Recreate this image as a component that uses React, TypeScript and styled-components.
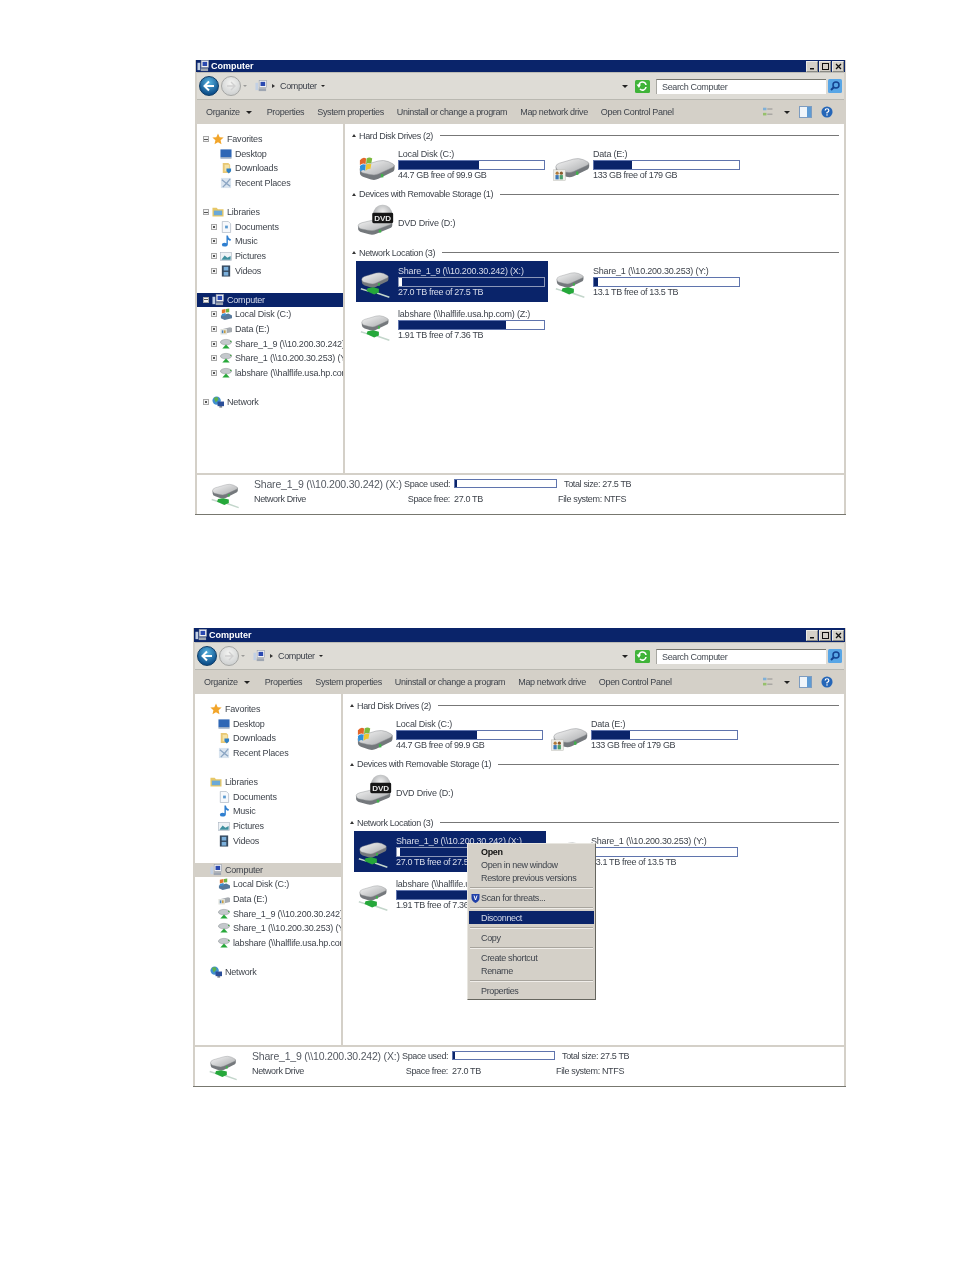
import React from 'react';
import styled, { createGlobalStyle } from 'styled-components';

const GlobalStyle = createGlobalStyle`
  html, body {
    margin: 0;
    padding: 0;
    background: #ffffff;
  }
  body {
    font-family: "Liberation Sans", Arial, sans-serif;
    font-size: 9px;
    letter-spacing: -0.35px;
    color: #333a45;
  }
`;

const Page = styled.div`
  width: 954px;
  height: 1270px;
  padding-top: 60px;
  box-sizing: border-box;
  overflow: hidden;
  display: flex;
  flex-direction: column;
  gap: 113px;
`;

const Win = styled.div<{ $left: number; $width: number }>`
  position: relative;
  margin-left: ${({ $left }) => $left}px;
  width: ${({ $width }) => $width}px;
  box-sizing: border-box;
  background: #d4d0c8;
  border-bottom: 1px solid #77776f;
  padding: 0 2px;
  filter: blur(0.45px);
`;

const TitleBar = styled.div<{ $height: number }>`
  height: ${({ $height }) => $height}px;
  margin: 0 -1px;
  background: #0a246a;
  display: flex;
  align-items: center;
  padding: 0 1px;
  gap: 2px;
  color: #ffffff;
  font-weight: 700;
  font-size: 9px;
  letter-spacing: 0;
`;

const TitleText = styled.span`
  flex: 1;
`;

const WinButtons = styled.div`
  display: flex;
  gap: 1px;
`;

const WinButton = styled.span`
  width: 12px;
  height: 11px;
  background: #d4d0c8;
  border: 1px solid #8a8a84;
  border-top-color: #ecebe6;
  border-left-color: #ecebe6;
  box-sizing: border-box;
  display: flex;
  align-items: center;
  justify-content: center;
`;

const AddressBar = styled.div`
  height: 28px;
  display: flex;
  align-items: center;
  background: #dedcd6;
  border-top: 1px solid #bdbcb6;
  border-bottom: 1px solid #b9b8b1;
  box-sizing: border-box;
  padding-left: 2px;
`;

const NavButton = styled.span<{ $dim?: boolean }>`
  width: 20px;
  height: 20px;
  border-radius: 50%;
  margin-right: 2px;
  display: flex;
  align-items: center;
  justify-content: center;
  box-sizing: border-box;
  background: ${({ $dim }) =>
    $dim ? 'radial-gradient(circle at 50% 35%, #f5f5f3, #c4c7c8)' : 'radial-gradient(circle at 50% 30%, #59b4e0, #0d4f8b 75%)'};
  border: 1px solid ${({ $dim }) => ($dim ? '#a5a6a4' : '#0e3c66')};
`;

const AddressField = styled.div`
  flex: 1;
  height: 20px;
  display: flex;
  align-items: center;
  gap: 4px;
  margin-left: 8px;
  color: #3c414a;
`;

const FieldSpacer = styled.span`
  flex: 1;
`;

const Caret = styled.span<{ $size?: number; $pale?: boolean }>`
  width: 0;
  height: 0;
  border-left: ${({ $size = 3 }) => $size}px solid transparent;
  border-right: ${({ $size = 3 }) => $size}px solid transparent;
  border-top: ${({ $size = 3 }) => $size}px solid ${({ $pale }) => ($pale ? '#9a9a98' : '#222222')};
`;

const CrumbArrow = styled.span`
  width: 0;
  height: 0;
  border-top: 2px solid transparent;
  border-bottom: 2px solid transparent;
  border-left: 3px solid #333333;
  margin: 0 1px;
`;

const SearchBox = styled.div`
  width: 170px;
  height: 15px;
  margin: 0 2px 0 6px;
  background: #ffffff;
  border-top: 1px solid #77776f;
  border-left: 1px solid #a8a8a2;
  box-sizing: border-box;
  display: flex;
  align-items: center;
  padding-left: 5px;
  color: #444a52;
`;

const ToolBar = styled.div`
  height: 24px;
  display: flex;
  align-items: center;
  background: #d4d0c8;
  padding: 0 11px 0 9px;
  color: #3f444c;
`;

const ToolItem = styled.span<{ $menu?: boolean }>`
  margin-right: ${({ $menu }) => ($menu ? 15 : 13)}px;
  display: flex;
  align-items: center;
  gap: 6px;
  white-space: nowrap;
`;

const ToolRight = styled.div`
  margin-left: auto;
  display: flex;
  align-items: center;
  gap: 9px;
`;

const Body = styled.div<{ $height: number }>`
  height: ${({ $height }) => $height}px;
  display: flex;
  background: #ffffff;
`;

const Sidebar = styled.div`
  width: 146px;
  flex: none;
  padding-top: 8px;
  overflow: hidden;
`;

const Splitter = styled.div`
  width: 2px;
  flex: none;
  background: #d4d0c8;
`;

const TreeSection = styled.div`
  margin-bottom: 14.6px;
`;

const TreeRow = styled.div<{ $state?: 'navy' | 'grey' }>`
  height: 14.6px;
  display: flex;
  align-items: center;
  white-space: nowrap;
  background: ${({ $state }) => ($state === 'navy' ? '#0a246a' : $state === 'grey' ? '#d4d0c8' : 'transparent')};
  color: ${({ $state }) => ($state === 'navy' ? '#d8dcea' : '#3f444c')};
`;

const Expander = styled.span<{ $child?: boolean; $off?: boolean; $sign: 'minus' | 'plus' }>`
  width: 6px;
  height: 6px;
  flex: none;
  margin-left: ${({ $child }) => ($child ? 14 : 6)}px;
  margin-right: 3px;
  box-sizing: border-box;
  border: 1px solid #a8a8a8;
  background: #f4f4f4;
  display: flex;
  align-items: center;
  justify-content: center;
  visibility: ${({ $off }) => ($off ? 'hidden' : 'visible')};
  &::before {
    content: '';
    width: ${({ $sign }) => ($sign === 'minus' ? 4 : 2)}px;
    height: ${({ $sign }) => ($sign === 'minus' ? 1 : 2)}px;
    background: #555555;
  }
`;

const TreeLabel = styled.span`
  margin-left: 3px;
  letter-spacing: -0.2px;
`;

const Main = styled.div`
  flex: 1;
  min-width: 0;
  padding: 5px 5px 0 7px;
`;

const GroupHead = styled.div`
  height: 13px;
  display: flex;
  align-items: center;
  gap: 3px;
  color: #3f444c;
  white-space: nowrap;
  &::before {
    content: '';
    width: 0;
    height: 0;
    border-left: 2px solid transparent;
    border-right: 2px solid transparent;
    border-bottom: 3px solid #333333;
  }
  &::after {
    content: '';
    flex: 1;
    height: 1px;
    margin-left: 4px;
    background: #777777;
  }
`;

const Tiles = styled.div`
  display: grid;
  grid-template-columns: 192px 192px;
  column-gap: 3px;
  row-gap: 2px;
  padding: 2px 0 2.5px 4px;
`;

const Tile = styled.div<{ $selected?: boolean }>`
  height: 41px;
  display: flex;
  align-items: center;
  box-sizing: border-box;
  background: ${({ $selected }) => ($selected ? '#0a246a' : 'transparent')};
  color: ${({ $selected }) => ($selected ? '#d8dcea' : '#3f444c')};
`;

const TileIcon = styled.span`
  width: 42px;
  flex: none;
  display: flex;
  justify-content: center;
`;

const TileText = styled.div`
  flex: 1;
  min-width: 0;
  white-space: nowrap;
`;

const TileName = styled.div`
  height: 11px;
  line-height: 10px;
  letter-spacing: -0.2px;
`;

const TileSub = styled.div`
  height: 10px;
  line-height: 10px;
`;

const Track = styled.div<{ $selected?: boolean; $width: number; $height: number }>`
  width: ${({ $width }) => $width}px;
  height: ${({ $height }) => $height}px;
  box-sizing: border-box;
  border: 1px solid ${({ $selected }) => ($selected ? '#8b97b8' : '#5f74ad')};
  background: ${({ $selected }) => ($selected ? '#0a246a' : '#ffffff')};
`;

const Fill = styled.div<{ $selected?: boolean }>`
  height: 100%;
  background: ${({ $selected }) => ($selected ? '#ffffff' : '#0a246a')};
`;

const Details = styled.div`
  height: 41px;
  background: #ffffff;
  border-top: 2px solid #d4d0c8;
  box-sizing: border-box;
  display: grid;
  grid-template-columns: 57px 150px 46px 4px 103px 1fr;
  grid-template-rows: 18px 12px;
  align-items: center;
  color: #3f444c;
  white-space: nowrap;
`;

const DetailIcon = styled.div`
  grid-row: 1 / 3;
  display: flex;
  justify-content: flex-end;
  padding: 4px 9px 0 0;
`;

const DetailTitle = styled.div`
  font-size: 10.5px;
  letter-spacing: -0.2px;
  color: #555a62;
`;

const DetailNote = styled.div`
  grid-column: 2;
`;

const DetailLabel = styled.div`
  text-align: right;
  grid-column: 3;
`;

const DetailValue = styled.div<{ $raised?: boolean }>`
  grid-column: 5;
  margin-top: ${({ $raised }) => ($raised ? -2 : 0)}px;
`;

const DetailExtra = styled.div<{ $indent: number }>`
  grid-column: 6;
  padding-left: ${({ $indent }) => $indent}px;
`;

const ContextMenu = styled.div`
  position: absolute;
  left: 274px;
  top: 215px;
  width: 129px;
  height: 157px;
  box-sizing: border-box;
  background: #d4d0c8;
  border: 1px solid #e8e6e0;
  border-right-color: #66665f;
  border-bottom-color: #66665f;
  padding: 1px;
  color: #3f444c;
`;

const MenuItem = styled.div<{ $bold?: boolean; $active?: boolean }>`
  height: 13px;
  display: flex;
  align-items: center;
  padding-left: 12px;
  position: relative;
  font-weight: ${({ $bold }) => ($bold ? 700 : 400)};
  background: ${({ $active }) => ($active ? '#0a246a' : 'transparent')};
  color: ${({ $bold, $active }) => ($active ? '#d8dcea' : $bold ? '#111111' : '#3f444c')};
`;

const MenuSep = styled.div`
  height: 2px;
  margin: 2.5px 1px;
  background: #a8a59e;
  border-bottom: 1px solid #f0eeea;
  box-sizing: border-box;
`;

const MenuShield = styled.span`
  position: absolute;
  left: 2px;
  top: 2px;
  display: flex;
`;

const DriveSvg = styled.svg`
  overflow: visible;
  flex: none;
`;

const TreeSvg = styled.svg`
  flex: none;
`;

type DriveKind = 'windows' | 'share' | 'dvd' | 'net';

// the same drive body, scaled per icon kind
const driveBody = (
  <>
    <path d="M4 15 V18 Q4 20.5 7 21.5 L13 23.5 Q16 24.5 19 23 L31 17 Q32.5 16 32 12 Z" fill="#74787c" />
    <path d="M4 15 Q4 13 7 12 L19 8.5 Q23 7.5 27 9 L31 11 Q33 12.5 30 14 L19 19 Q16 20.5 12 19.5 L6 18 Q4 17 4 15 Z" fill="url(#driveTop)" stroke="#8c8f92" strokeWidth="0.4" />
    <rect x="21" y="19" width="2" height="2.8" fill="#3fb04a" />
  </>
);

const driveTransforms: Record<DriveKind, string> = {
  windows: 'translate(-3.2,2.6) scale(1.3)',
  share: 'translate(-2,1) scale(1.25)',
  dvd: 'translate(-5,4) scale(1.28,1.05)',
  net: '',
};

const DriveIcon = ({ kind, size = 38 }: { kind: DriveKind; size?: number }) => (
  <DriveSvg width={size} height={size * 0.85} viewBox="0 0 40 34">
    <defs>
      <linearGradient id="driveTop" x1="0" y1="0" x2="1" y2="1">
        <stop offset="0" stopColor="#f6f6f6" />
        <stop offset="1" stopColor="#a8aaac" />
      </linearGradient>
      <radialGradient id="driveDisc" cx="0.5" cy="0.35" r="0.7">
        <stop offset="0" stopColor="#f2f2f2" />
        <stop offset="1" stopColor="#8f9295" />
      </radialGradient>
    </defs>
    {kind === 'dvd' && <ellipse cx="26" cy="9" rx="10.5" ry="11.5" fill="url(#driveDisc)" />}
    <g transform={driveTransforms[kind]}>{driveBody}</g>
    {kind === 'windows' && (
      <g>
        <path d="M2 13 Q5 9 8.5 11 L8 17 Q5 15 2 18 Z" fill="#e2662a" />
        <path d="M9 11 Q12 9 15 11 L14 16 Q11 15 8.5 17 Z" fill="#7cb83d" />
        <path d="M2 19 Q5 16 8 18 L7.5 24 Q5 22 2.5 25 Z" fill="#2f8fd8" />
        <path d="M8.5 18 Q11 16 14 17 L13 22 Q11 21 8 24 Z" fill="#eec52f" />
      </g>
    )}
    {kind === 'share' && (
      <g>
        <rect x="0.5" y="23" width="12.5" height="11" fill="#eeeee8" stroke="#b8b8b2" strokeWidth="0.5" />
        <circle cx="4.4" cy="26.5" r="1.7" fill="#b07a3a" />
        <circle cx="8.8" cy="26.5" r="1.7" fill="#8a5a2a" />
        <rect x="2.6" y="28.5" width="3.4" height="4.5" fill="#3a78b8" />
        <rect x="7" y="28.5" width="3.4" height="4.5" fill="#4a9e6a" />
      </g>
    )}
    {kind === 'net' && (
      <g>
        <path d="M3 25 L11 27.5 M20 29.5 L33 34" stroke="#c3d6cb" strokeWidth="1.6" />
        <path d="M10 24.5 L16 23.5 L22 25 L22 29 L17 31 L9 27.5 Z" fill="#25a83a" />
      </g>
    )}
    {kind === 'dvd' && (
      <g>
        <rect x="15" y="6" width="22" height="11" rx="1.5" fill="#161616" />
        <text x="17" y="14.6" fontSize="8.5" fontWeight="700" letterSpacing="0" fill="#e8e8e8" fontFamily="Liberation Sans">DVD</text>
      </g>
    )}
  </DriveSvg>
);

type TreeKind = 'star' | 'desktop' | 'downloads' | 'recent' | 'libraries' | 'docs' | 'music' | 'pictures' | 'videos' | 'computer' | 'disk' | 'data' | 'netdrive' | 'network';

const treeArt: Record<TreeKind, React.ReactNode> = {
  star: <path d="M6.5 0.5 L8.3 4.6 L12.6 5 L9.3 7.9 L10.3 12.3 L6.5 10 L2.7 12.3 L3.7 7.9 L0.4 5 L4.7 4.6 Z" fill="#f2a52a" />,
  desktop: (
    <>
      <rect x="0.5" y="1.5" width="12" height="8.5" fill="#2f67b5" />
      <rect x="0.5" y="10" width="12" height="1.5" fill="#8a9fb8" />
    </>
  ),
  downloads: (
    <>
      <path d="M3 1 H9 L11 3 V12 H3 Z" fill="#e8c875" />
      <rect x="5" y="3" width="5" height="7" fill="#f5e3a6" />
      <path d="M7 7 H12 V10 L9.5 12.5 L7 10 Z" fill="#2d7fc4" />
    </>
  ),
  recent: (
    <>
      <rect x="1" y="1" width="11" height="11" fill="#d9e4ef" />
      <path d="M2 3 L7 7 L11 2 M3 11 L7 7 L11 10" stroke="#8aa4c2" strokeWidth="1.4" fill="none" />
    </>
  ),
  libraries: (
    <>
      <path d="M0.5 2 H5 L6.5 3.5 H12.5 V11.5 H0.5 Z" fill="#e6c768" />
      <rect x="2" y="5" width="9" height="5" fill="#6aa9d8" />
    </>
  ),
  docs: (
    <>
      <path d="M2.5 0.5 H9 L11.5 3 V12.5 H2.5 Z" fill="#f7f9fc" stroke="#a5b0bd" strokeWidth="0.7" />
      <rect x="5.5" y="5" width="3" height="3" fill="#5d9bd0" />
    </>
  ),
  music: <path d="M7 0.5 L8.5 0.5 Q9 4 12 5 L11 6.5 Q9.5 6 8.5 5 V10 Q8.5 12.5 5 12.5 Q2 12.5 2 10.5 Q2 8.5 5 8.5 Q6 8.5 7 9 Z" fill="#2f7fd0" />,
  pictures: (
    <>
      <rect x="0.5" y="2.5" width="12" height="9" fill="#eef2f6" stroke="#a5b0bd" strokeWidth="0.6" />
      <path d="M1.5 10.5 L5 6 L8 8.5 L11.5 6.5 V10.5 Z" fill="#3f8f9e" />
    </>
  ),
  videos: (
    <>
      <rect x="2" y="0.5" width="9" height="12" fill="#35485e" />
      <rect x="4" y="2" width="5" height="4" fill="#7bb0dc" />
      <rect x="4" y="7.5" width="5" height="4" fill="#7bb0dc" />
    </>
  ),
  computer: (
    <>
      <rect x="4.5" y="0.5" width="8" height="7.5" fill="#f2f2f4" stroke="#8f98a6" strokeWidth="0.6" />
      <rect x="6" y="2" width="5" height="4.5" fill="#2a49b0" />
      <rect x="0.5" y="3" width="3" height="8" fill="#c2d0e4" />
      <rect x="4" y="9" width="8" height="3" fill="#9ea6b2" />
    </>
  ),
  disk: (
    <>
      <path d="M1 8 L9 6 L13 8 V11 L5 13 L1 11 Z" fill="#56799c" />
      <path d="M2 2 L6 1 V5 L2 6 Z" fill="#e2762a" />
      <path d="M6.5 1 L10 0.5 V4.5 L6.5 5 Z" fill="#6fb33d" />
      <path d="M2 6.5 L6 5.5 V8 L2 9 Z" fill="#3d8fcf" />
    </>
  ),
  data: (
    <>
      <path d="M3 6.5 L11 4.5 L14 6 V9.5 L6 11.5 L3 10 Z" fill="#a6abb0" />
      <rect x="0.5" y="6.5" width="7" height="6" fill="#e0e2dc" />
      <rect x="2" y="8" width="1.6" height="3" fill="#4a85bf" />
      <rect x="4.4" y="8" width="1.6" height="3" fill="#c79a3a" />
    </>
  ),
  netdrive: (
    <>
      <ellipse cx="6.5" cy="4.5" rx="6" ry="3" fill="#c4c8cc" stroke="#7f8488" strokeWidth="0.5" />
      <rect x="11" y="3" width="1.4" height="1.4" fill="#39a33b" />
      <path d="M6.5 7 L10.5 11.5 H2.5 Z" fill="#28a83a" />
    </>
  ),
  network: (
    <>
      <circle cx="5" cy="5" r="4.5" fill="#3f8fd0" />
      <path d="M2 2 L6 1 L7 4 L4 7 Z" fill="#5fb04a" />
      <rect x="6" y="6" width="7" height="5" fill="#2c4f99" />
      <rect x="8" y="11" width="3" height="1.5" fill="#5e6a7c" />
    </>
  ),
};

const TreeIcon = ({ kind }: { kind: TreeKind }) => (
  <TreeSvg width="12" height="12" viewBox="0 0 13 13">
    {treeArt[kind]}
  </TreeSvg>
);

const treeSections: { root: [TreeKind, string]; expand?: boolean; current?: boolean; closed?: boolean; kids: [TreeKind, string][] }[] = [
  { root: ['star', 'Favorites'], kids: [['desktop', 'Desktop'], ['downloads', 'Downloads'], ['recent', 'Recent Places']] },
  { root: ['libraries', 'Libraries'], expand: true, kids: [['docs', 'Documents'], ['music', 'Music'], ['pictures', 'Pictures'], ['videos', 'Videos']] },
  {
    root: ['computer', 'Computer'],
    expand: true,
    current: true,
    kids: [
      ['disk', 'Local Disk (C:)'],
      ['data', 'Data (E:)'],
      ['netdrive', 'Share_1_9 (\\\\10.200.30.242) (X:)'],
      ['netdrive', 'Share_1 (\\\\10.200.30.253) (Y:)'],
      ['netdrive', 'labshare (\\\\halflife.usa.hp.com) (Z:)'],
    ],
  },
  { root: ['network', 'Network'], closed: true, kids: [] },
];

const groups: { title: string; tiles: { icon: DriveKind; name: string; free?: string; used?: number; selected?: boolean }[] }[] = [
  {
    title: 'Hard Disk Drives (2)',
    tiles: [
      { icon: 'windows', name: 'Local Disk (C:)', free: '44.7 GB free of 99.9 GB', used: 55 },
      { icon: 'share', name: 'Data (E:)', free: '133 GB free of 179 GB', used: 26 },
    ],
  },
  { title: 'Devices with Removable Storage (1)', tiles: [{ icon: 'dvd', name: 'DVD Drive (D:)' }] },
  {
    title: 'Network Location (3)',
    tiles: [
      { icon: 'net', name: 'Share_1_9 (\\\\10.200.30.242) (X:)', free: '27.0 TB free of 27.5 TB', used: 2, selected: true },
      { icon: 'net', name: 'Share_1 (\\\\10.200.30.253) (Y:)', free: '13.1 TB free of 13.5 TB', used: 3 },
      { icon: 'net', name: 'labshare (\\\\halflife.usa.hp.com) (Z:)', free: '1.91 TB free of 7.36 TB', used: 74 },
    ],
  },
];

const toolItems = ['Properties', 'System properties', 'Uninstall or change a program', 'Map network drive', 'Open Control Panel'];

type ExplorerProps = {
  left: number;
  width: number;
  titleHeight: number;
  bodyHeight: number;
  active: boolean;
  children?: React.ReactNode;
};

const Explorer = ({ left, width, titleHeight, bodyHeight, active, children }: ExplorerProps) => (
  <Win $left={left} $width={width}>
    <TitleBar $height={titleHeight}>
      <TreeIcon kind="computer" />
      <TitleText>Computer</TitleText>
      <WinButtons>
        <WinButton>
          <svg width="7" height="7" viewBox="0 0 7 7"><rect x="1" y="5" width="4" height="1.5" fill="#111" /></svg>
        </WinButton>
        <WinButton>
          <svg width="7" height="7" viewBox="0 0 7 7"><rect x="0.5" y="0.5" width="6" height="6" fill="none" stroke="#111" /></svg>
        </WinButton>
        <WinButton>
          <svg width="7" height="7" viewBox="0 0 7 7"><path d="M1 1 L6 6 M6 1 L1 6" stroke="#111" strokeWidth="1.3" /></svg>
        </WinButton>
      </WinButtons>
    </TitleBar>
    <AddressBar>
      <NavButton>
        <svg width="12" height="12" viewBox="0 0 12 12"><path d="M6 1.5 L1.5 6 L6 10.5 M2 6 H11" stroke="#fff" strokeWidth="2" fill="none" /></svg>
      </NavButton>
      <NavButton $dim>
        <svg width="12" height="12" viewBox="0 0 12 12"><path d="M6 2 L10 6 L6 10 M10 6 H2" stroke="#d0d0d0" strokeWidth="1.4" fill="none" /></svg>
      </NavButton>
      <Caret $size={2} $pale />
      <AddressField>
        <TreeIcon kind="computer" />
        <CrumbArrow />
        Computer
        <Caret $size={2} />
        <FieldSpacer />
        <Caret />
      </AddressField>
      <svg width="15" height="13" viewBox="0 0 15 13" style={{ marginLeft: 7 }}>
        <rect width="15" height="13" rx="1.5" fill="#3fb339" />
        <path d="M4 6 A3.5 3.5 0 0 1 11 5 M11 7 A3.5 3.5 0 0 1 5 9" stroke="#fff" strokeWidth="1.6" fill="none" />
        <path d="M1.5 4.5 L6 4.5 L4 8 Z" fill="#fff" />
      </svg>
      <SearchBox>Search Computer</SearchBox>
      <svg width="14" height="14" viewBox="0 0 14 14" style={{ marginRight: 2 }}>
        <rect width="14" height="14" rx="1.5" fill="#58a6e6" />
        <circle cx="8" cy="6" r="3" fill="none" stroke="#14418f" strokeWidth="1.5" />
        <path d="M6 8 L3 11" stroke="#14418f" strokeWidth="2" />
      </svg>
    </AddressBar>
    <ToolBar>
      <ToolItem $menu>
        Organize
        <Caret />
      </ToolItem>
      {toolItems.map((label) => (
        <ToolItem key={label}>{label}</ToolItem>
      ))}
      <ToolRight>
        <svg width="12" height="12" viewBox="0 0 14 12">
          <rect x="0" y="1" width="4" height="3" fill="#7fb0d8" />
          <rect x="5" y="2" width="6" height="1" fill="#8a8a8a" />
          <rect x="0" y="7" width="4" height="3" fill="#96c06c" />
          <rect x="5" y="8" width="6" height="1" fill="#8a8a8a" />
        </svg>
        <Caret />
        <svg width="13" height="12" viewBox="0 0 13 12">
          <rect x="0.5" y="0.5" width="12" height="11" fill="#f0f5fa" stroke="#7d9cc0" />
          <rect x="8" y="1" width="4" height="10" fill="#5e9bd4" />
        </svg>
        <svg width="12" height="12" viewBox="0 0 13 13">
          <circle cx="6.5" cy="6.5" r="6" fill="#2566b8" />
          <path d="M4.5 5 Q4.5 3 6.5 3 Q8.5 3 8.5 4.8 Q8.5 6 6.5 7 V8" stroke="#fff" strokeWidth="1.3" fill="none" />
          <rect x="5.8" y="9" width="1.4" height="1.4" fill="#fff" />
        </svg>
      </ToolRight>
    </ToolBar>
    <Body $height={bodyHeight}>
      <Sidebar>
        {treeSections.map((section) => (
          <TreeSection key={section.root[1]}>
            <TreeRow $state={section.current ? (active ? 'navy' : 'grey') : undefined}>
              <Expander $off={!active} $sign={section.closed ? 'plus' : 'minus'} />
              <TreeIcon kind={section.root[0]} />
              <TreeLabel>{section.root[1]}</TreeLabel>
            </TreeRow>
            {section.kids.map(([icon, label]) => (
              <TreeRow key={label}>
                <Expander $child $sign="plus" $off={!active || !section.expand} />
                <TreeIcon kind={icon} />
                <TreeLabel>{label}</TreeLabel>
              </TreeRow>
            ))}
          </TreeSection>
        ))}
      </Sidebar>
      <Splitter />
      <Main>
        {groups.map((group) => (
          <div key={group.title}>
            <GroupHead>{group.title}</GroupHead>
            <Tiles>
              {group.tiles.map((tile) => (
                <Tile key={tile.name} $selected={tile.selected}>
                  <TileIcon>
                    <DriveIcon kind={tile.icon} />
                  </TileIcon>
                  <TileText>
                    <TileName>{tile.name}</TileName>
                    {tile.free && (
                      <>
                        <Track $selected={tile.selected} $width={147} $height={10}>
                          <Fill $selected={tile.selected} style={{ width: `${tile.used}%` }} />
                        </Track>
                        <TileSub>{tile.free}</TileSub>
                      </>
                    )}
                  </TileText>
                </Tile>
              ))}
            </Tiles>
          </div>
        ))}
      </Main>
    </Body>
    <Details>
      <DetailIcon>
        <DriveIcon kind="net" size={36} />
      </DetailIcon>
      <DetailTitle>Share_1_9 (\\10.200.30.242) (X:)</DetailTitle>
      <DetailLabel>Space used:</DetailLabel>
      <DetailValue $raised>
        <Track $width={103} $height={9}>
          <Fill style={{ width: '2%' }} />
        </Track>
      </DetailValue>
      <DetailExtra $indent={7}>Total size: 27.5 TB</DetailExtra>
      <DetailNote>Network Drive</DetailNote>
      <DetailLabel>Space free:</DetailLabel>
      <DetailValue>27.0 TB</DetailValue>
      <DetailExtra $indent={1}>File system: NTFS</DetailExtra>
    </Details>
    {children}
  </Win>
);

const App: React.FC = () => (
  <Page>
    <GlobalStyle />
    <Explorer left={195} width={651} titleHeight={12} bodyHeight={349} active />
    <Explorer left={193} width={653} titleHeight={14} bodyHeight={351} active={false}>
      <ContextMenu>
        <MenuItem $bold>Open</MenuItem>
        <MenuItem>Open in new window</MenuItem>
        <MenuItem>Restore previous versions</MenuItem>
        <MenuSep />
        <MenuItem>
          <MenuShield>
            <svg width="9" height="10" viewBox="0 0 9 10"><path d="M0.5 1 H8.5 V5 Q8.5 8 4.5 10 Q0.5 8 0.5 5 Z" fill="#1f3fa8" /><path d="M3 2.5 L4.5 7 L6 2.5" stroke="#fff" strokeWidth="1" fill="none" /></svg>
          </MenuShield>
          Scan for threats...
        </MenuItem>
        <MenuSep />
        <MenuItem $active>Disconnect</MenuItem>
        <MenuSep />
        <MenuItem>Copy</MenuItem>
        <MenuSep />
        <MenuItem>Create shortcut</MenuItem>
        <MenuItem>Rename</MenuItem>
        <MenuSep />
        <MenuItem>Properties</MenuItem>
      </ContextMenu>
    </Explorer>
  </Page>
);

export default App;
